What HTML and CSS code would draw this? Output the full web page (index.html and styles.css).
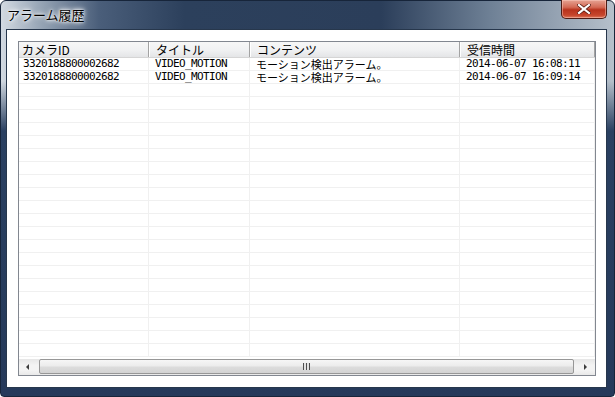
FILE: index.html
```html
<!DOCTYPE html>
<html lang="ja">
<head>
    <meta charset="UTF-8">
    <title>アラーム履歴</title>
    <link rel="stylesheet" href="styles.css">
</head>
<body>
    <div class="window">
        <!-- Title bar -->
        <div class="titlebar">
            <span class="title">アラーム履歴</span>
            <button class="close-btn">
                <svg width="14" height="10" viewBox="0 0 14 10">
                    <path d="M2 1 L12 9 M12 1 L2 9" stroke="#5a1a10" stroke-width="3.6" stroke-linecap="square"/>
                    <path d="M2 1 L12 9 M12 1 L2 9" stroke="#ffffff" stroke-width="2.2" stroke-linecap="square"/>
                </svg>
            </button>
        </div>

        <!-- Client area -->
        <div class="client">
            <div class="list">
                <div class="list-header">
                    <div class="hcell">カメラID</div>
                    <div class="hcell">タイトル</div>
                    <div class="hcell">コンテンツ</div>
                    <div class="hcell">受信時間</div>
                </div>
                <div class="list-body" id="list-body">
                    <div class="row">
                        <div class="cell mono">3320188800002682</div>
                        <div class="cell mono">VIDEO_MOTION</div>
                        <div class="cell jp">モーション検出アラーム。</div>
                        <div class="cell mono">2014-06-07 16:08:11</div>
                    </div>
                    <div class="row">
                        <div class="cell mono">3320188800002682</div>
                        <div class="cell mono">VIDEO_MOTION</div>
                        <div class="cell jp">モーション検出アラーム。</div>
                        <div class="cell mono">2014-06-07 16:09:14</div>
                    </div>
                </div>
                <div class="hscroll">
                    <div class="arrow left"></div>
                    <div class="track">
                        <div class="thumb"><span class="grip"></span></div>
                    </div>
                    <div class="arrow right"></div>
                </div>
            </div>
        </div>
    </div>

    <script>
        // fill remaining empty grid rows
        const body = document.getElementById('list-body');
        for (let i = 0; i < 21; i++) {
            const row = document.createElement('div');
            row.classList.add('row');
            row.innerHTML = '<div class="cell"></div><div class="cell"></div><div class="cell"></div><div class="cell"></div>';
            body.appendChild(row);
        }
    </script>
</body>
</html>
```

FILE: styles.css
```css
* {
    margin: 0;
    padding: 0;
    box-sizing: border-box;
}

body {
    width: 615px;
    height: 397px;
    overflow: hidden;
    background: #ffffff;
    font-family: "Noto Sans CJK JP", sans-serif;
}

.window {
    width: 615px;
    height: 397px;
    display: flex;
    flex-direction: column;
    border: 1px solid #17253a;
    border-radius: 6px 6px 4px 4px;
    background:
        linear-gradient(to bottom, rgba(40, 60, 90, 0) 0, rgba(40, 60, 90, 0) 80px, #2a4061 130px, #25395a 100%),
        linear-gradient(to right, #d3dae2 0%, #9aa8b8 6%, #4a5e7a 16%, #2c405c 30%, #2b3e5a 62%, #6f8196 80%, #9aa7b6 92%, #b6c0cb 100%);
}

.titlebar {
    height: 28px;
    display: flex;
    justify-content: space-between;
    align-items: flex-start;
    padding-left: 6px;
    padding-right: 7px;
}

.title {
    font-size: 13px;
    line-height: 28px;
    color: #000000;
    text-shadow: 0 0 6px #ffffff, 0 0 4px #ffffff, 0 0 2px #ffffff;
}

.close-btn {
    width: 46px;
    height: 19px;
    margin-top: -1px;
    border: 1px solid #4e1d16;
    border-top: none;
    border-radius: 0 0 5px 5px;
    background: linear-gradient(to bottom, #e6a393 0%, #d46a55 40%, #b8321c 55%, #c7462c 85%, #df7a5e 100%);
    box-shadow: inset 0 0 0 1px rgba(255, 210, 200, 0.45);
    display: flex;
    align-items: center;
    justify-content: center;
}

.client {
    flex: 1;
    margin: 0 7px 8px 5px;
    background: #ffffff;
    border: 1px solid #27374c;
    padding: 11px 10px 11px 11px;
}

.list {
    height: 100%;
    border: 1px solid #828790;
    display: flex;
    flex-direction: column;
}

.list-header,
.row {
    display: grid;
    grid-template-columns: 130px 101px 210px 135px;
}

.list-header {
    height: 16px;
    background: linear-gradient(to bottom, #f7f7f7 0%, #f1f2f3 50%, #e4e5e7 100%);
    border-bottom: 1px solid #d5d5d5;
}

.hcell {
    font-size: 12px;
    line-height: 15px;
    padding-left: 6px;
    color: #000000;
    border-right: 1px solid #a3a3a3;
    border-left: 1px solid #ffffff;
    overflow: hidden;
}

.hcell:first-child {
    padding-left: 3px;
    border-left: none;
}

.list-body {
    flex: 1;
    overflow: hidden;
}

.row {
    height: 13px;
    border-bottom: 1px solid #f0f0f0;
}

.cell {
    height: 12px;
    line-height: 12px;
    padding-left: 6px;
    border-right: 1px solid #f0f0f0;
    white-space: nowrap;
    color: #000000;
}

.cell:first-child {
    padding-left: 4px;
}

.mono {
    font-family: "DejaVu Sans Mono", monospace;
    font-size: 11px;
    letter-spacing: -0.62px;
}

.jp {
    font-family: "Noto Sans CJK JP", sans-serif;
    font-size: 11px;
    line-height: 11px;
    padding-top: 1px;
}

.hscroll {
    height: 16px;
    display: flex;
    background: linear-gradient(to bottom, #e6e6e6 0%, #f3f3f3 40%, #f3f3f3 70%, #e9e9e9 100%);
}

.arrow {
    width: 17px;
    display: flex;
    align-items: center;
    justify-content: center;
}

.arrow.left::before {
    content: "";
    border-top: 3px solid transparent;
    border-bottom: 3px solid transparent;
    border-right: 3px solid #3c3c3c;
}

.arrow.right {
    width: 19px;
}

.arrow.right::before {
    content: "";
    border-top: 3px solid transparent;
    border-bottom: 3px solid transparent;
    border-left: 3px solid #3c3c3c;
}

.track {
    flex: 1;
    padding: 0 2px 1px 3px;
}

.thumb {
    height: 15px;
    border: 1px solid #979797;
    border-radius: 2px;
    background: linear-gradient(to bottom, #f6f6f6 0%, #ececec 45%, #dcdcdc 55%, #d3d3d3 100%);
    display: flex;
    align-items: center;
    justify-content: center;
}

.grip {
    width: 7px;
    height: 7px;
    background: repeating-linear-gradient(to right, #4f4f4f 0, #4f4f4f 1px, #e2e2e2 1px, #e2e2e2 3px);
}
```
